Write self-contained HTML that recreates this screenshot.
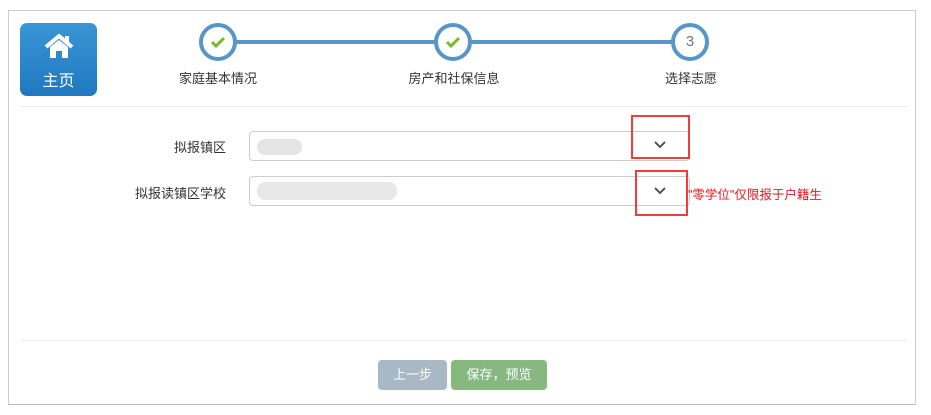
<!DOCTYPE html>
<html><head><meta charset="utf-8"><style>
body{margin:0;width:931px;height:415px;background:#fff;font-family:"Liberation Sans","Noto Sans CJK SC",sans-serif;position:relative;overflow:hidden}
.a{position:absolute}
.box{left:8px;top:10px;width:906px;height:393px;border:1px solid #ccc;border-bottom:1px solid #bbb}
.home{left:20px;top:23px;width:77px;height:73px;border-radius:7px;background:linear-gradient(#3a96d6,#1f78c0);color:#fff;text-align:center;font-size:16px}
.c{width:30px;height:30px;border:4px solid #5896c8;border-radius:50%;background:#fff;text-align:center;line-height:30px;color:#777;font-size:15px}
.lbl{font-size:13px;color:#333;text-align:center;width:140px}
.sel{left:249px;width:439px;height:28px;border:1px solid #ccc;border-radius:4px}
.red{border:2px solid #f03c3c}
.fl{font-size:13px;color:#333;text-align:right;width:120px}
.btn{top:360px;height:30px;border-radius:4px;color:#fff;font-size:13px;text-align:center;line-height:30px}
</style></head><body>
<div class="a box"></div>
<div class="a home">
<svg class="a" style="left:24px;top:11px" width="30" height="25" viewBox="0 0 30 25"><path d="M2 13 L15 2 L28 13" stroke="#fff" stroke-width="4" fill="none" stroke-linejoin="miter"/><path d="M6 13 L15 6 L24 13 V24 H18 V17 H12 V24 H6Z" fill="#fff"/><rect x="21" y="2" width="4" height="7" fill="#fff"/></svg>
<div class="a" style="left:0;width:77px;top:44px">主页</div></div>
<div class="a" style="left:220px;top:40px;width:470px;height:4px;background:#5896c8"></div>
<div class="a c" style="left:199px;top:23px"><svg width="16" height="14" viewBox="0 0 16 14" style="margin-top:8px"><path d="M2 7 L6 11 L14 3" stroke="#7cb82f" stroke-width="3" fill="none"/></svg></div>
<div class="a c" style="left:434px;top:23px"><svg width="16" height="14" viewBox="0 0 16 14" style="margin-top:8px"><path d="M2 7 L6 11 L14 3" stroke="#7cb82f" stroke-width="3" fill="none"/></svg></div>
<div class="a c" style="left:671px;top:23px">3</div>
<div class="a lbl" style="left:148px;top:68px">家庭基本情况</div>
<div class="a lbl" style="left:384px;top:68px">房产和社保信息</div>
<div class="a lbl" style="left:621px;top:68px">选择志愿</div>
<div class="a" style="left:20px;top:106px;width:888px;height:1px;background:#eee"></div>
<div class="a fl" style="left:106px;top:137px">拟报镇区</div>
<div class="a fl" style="left:106px;top:183px">拟报读镇区学校</div>
<div class="a sel" style="top:131px"><div class="a" style="left:7px;top:7px;width:45px;height:16px;background:#e4e4e4;border-radius:8px"></div></div>
<div class="a sel" style="top:176px"><div class="a" style="left:7px;top:5px;width:140px;height:18px;background:#e8e8e8;border-radius:8px"></div></div>
<svg class="a" style="left:654px;top:141px" width="12" height="8"><path d="M1 1 L6 6 L11 1" stroke="#555" stroke-width="2" fill="none"/></svg>
<svg class="a" style="left:654px;top:187px" width="12" height="8"><path d="M1 1 L6 6 L11 1" stroke="#555" stroke-width="2" fill="none"/></svg>
<div class="a red" style="left:631px;top:115px;width:55px;height:40px"></div>
<div class="a red" style="left:635px;top:170px;width:49px;height:42px"></div>
<div class="a" style="left:688px;top:184px;font-size:12.5px;color:#f0141e">"零学位"仅限报于户籍生</div>
<div class="a" style="left:20px;top:340px;width:888px;height:1px;background:#eee"></div>
<div class="a btn" style="left:378px;width:69px;background:#a8b8c4">上一步</div>
<div class="a btn" style="left:451px;width:96px;background:#86b880">保存，预览</div>
</body></html>
